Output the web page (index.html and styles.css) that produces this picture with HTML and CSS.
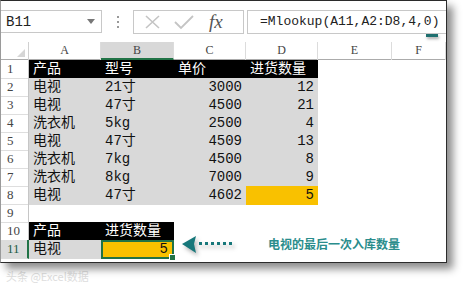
FILE: index.html
```html
<!DOCTYPE html>
<html lang="zh">
  <head>
    <meta charset="utf-8">
    <title>Lookup</title>
    <link rel="stylesheet" href="styles.css">
  </head>
  <body>
    <div class='sheet'>
        <div class='fbar'>
            <div class='namebox'><span>B11</span><i class='drop'></i></div>
            <div class='grip'><b></b><b></b><b></b></div>
            <div class='btns'>
                <svg width="20" height="16" viewBox="0 0 20 16"><path d="M3 2 L16 14 M16 2 L3 14" stroke="#c4c4c4" stroke-width="1.6" fill="none"/></svg>
                <svg width="22" height="16" viewBox="0 0 22 16"><path d="M2 8 L8 14 L20 2" stroke="#c4c4c4" stroke-width="1.8" fill="none"/></svg>
                <span class='fx'>fx</span>
            </div>
            <div class='formula'>=Mlookup(A11,A2:D8,4,0)</div>
            <div class='fold'></div>
        </div>
        <div class='row colhead'>
            <div class='corner'></div>
            <div class='ch'>A</div>
            <div class='ch sel'>B</div>
            <div class='ch'>C</div>
            <div class='ch'>D</div>
            <div class='ch'>E</div>
            <div class='ch'>F</div>
        </div>
        <div class='row'>
            <div class='rh'>1</div>
            <div class='c hd'>产品</div><div class='c hd'>型号</div><div class='c hd'>单价</div><div class='c hd'>进货数量</div><div class='c'></div><div class='c'></div>
        </div>
        <div class='row'>
            <div class='rh'>2</div>
            <div class='c gr'>电视</div><div class='c gr'>21寸</div><div class='c gr num'>3000</div><div class='c gr num'>12</div><div class='c'></div><div class='c'></div>
        </div>
        <div class='row'>
            <div class='rh'>3</div>
            <div class='c gr'>电视</div><div class='c gr'>47寸</div><div class='c gr num'>4500</div><div class='c gr num'>21</div><div class='c'></div><div class='c'></div>
        </div>
        <div class='row'>
            <div class='rh'>4</div>
            <div class='c gr'>洗衣机</div><div class='c gr'>5kg</div><div class='c gr num'>2500</div><div class='c gr num'>4</div><div class='c'></div><div class='c'></div>
        </div>
        <div class='row'>
            <div class='rh'>5</div>
            <div class='c gr'>电视</div><div class='c gr'>47寸</div><div class='c gr num'>4509</div><div class='c gr num'>13</div><div class='c'></div><div class='c'></div>
        </div>
        <div class='row'>
            <div class='rh'>6</div>
            <div class='c gr'>洗衣机</div><div class='c gr'>7kg</div><div class='c gr num'>4500</div><div class='c gr num'>8</div><div class='c'></div><div class='c'></div>
        </div>
        <div class='row'>
            <div class='rh'>7</div>
            <div class='c gr'>洗衣机</div><div class='c gr'>8kg</div><div class='c gr num'>7000</div><div class='c gr num'>9</div><div class='c'></div><div class='c'></div>
        </div>
        <div class='row'>
            <div class='rh'>8</div>
            <div class='c gr'>电视</div><div class='c gr'>47寸</div><div class='c gr num'>4602</div><div class='c yl num'>5</div><div class='c'></div><div class='c'></div>
        </div>
        <div class='row'>
            <div class='rh'>9</div>
            <div class='c'></div><div class='c'></div><div class='c'></div><div class='c'></div><div class='c'></div><div class='c'></div>
        </div>
        <div class='row'>
            <div class='rh'>10</div>
            <div class='c hd'>产品</div><div class='c hd'>进货数量</div><div class='c'></div><div class='c'></div><div class='c'></div><div class='c'></div>
        </div>
        <div class='row'>
            <div class='rh rsel'>11</div>
            <div class='c gr'>电视</div><div class='c yl num active'>5<i class='handle'></i></div><div class='c'></div><div class='c'></div><div class='c'></div><div class='c'></div>
        </div>
        <div class='note'>
            <svg width="56" height="20" viewBox="0 0 56 20">
                <path d="M0 8 L14 0 L12 8 L14 17 Z" fill="#17777a"/>
                <rect x="17" y="6" width="3" height="3" fill="#17777a"/>
                <rect x="23" y="6" width="3" height="3" fill="#17777a"/>
                <rect x="29" y="6" width="3" height="3" fill="#17777a"/>
                <rect x="35" y="6" width="3" height="3" fill="#17777a"/>
                <rect x="41" y="6" width="3" height="3" fill="#17777a"/>
                <rect x="47" y="6" width="3" height="3" fill="#17777a"/>
            </svg>
            <span class='label'>电视的最后一次入库数量</span>
        </div>
    </div>
    <div class='mark'>头条 @Excel数据</div>
  </body>
</html>
```
FILE: styles.css
```css
body {
    margin: 0;
    background-color: #FFFFFF;
    font-family: "Liberation Mono", "Noto Sans CJK SC", monospace;
}
.sheet {
    position: relative;
    box-sizing: border-box;
    width: 447px;
    height: 263px;
    border: 1px solid #2b2b2b;
    border-left-color: #9a9a9a;
    background-color: #FFFFFF;
    box-shadow: 6px 6px 8px rgba(0,0,0,0.45);
}
.fbar {
    position: relative;
    display: flex;
    align-items: center;
    height: 41px;
}
.namebox {
    box-sizing: border-box;
    display: flex;
    align-items: center;
    justify-content: space-between;
    width: 101px;
    height: 23px;
    padding: 0 6px 0 5px;
    border: 1px solid #c8c8c8;
    border-left: none;
    font-size: 14px;
    color: #222;
}
.drop {
    width: 0;
    height: 0;
    border-left: 4px solid transparent;
    border-right: 4px solid transparent;
    border-top: 5px solid #777;
}
.grip {
    display: flex;
    flex-direction: column;
    gap: 3px;
    width: 31px;
    align-items: center;
}
.grip b {
    width: 2px;
    height: 2px;
    background-color: #999;
}
.btns {
    box-sizing: border-box;
    display: flex;
    align-items: center;
    gap: 10px;
    width: 111px;
    height: 24px;
    padding-left: 9px;
    border: 1px solid #c8c8c8;
}
.fx {
    font-family: "Liberation Serif", serif;
    font-style: italic;
    font-size: 19px;
    color: #555;
    margin-left: 4px;
}
.formula {
    box-sizing: border-box;
    flex: 1;
    height: 24px;
    margin-left: 3px;
    padding-left: 12px;
    border: 1px solid #c8c8c8;
    border-right: none;
    font-size: 13px;
    line-height: 22px;
    color: #222;
}
.fold {
    position: absolute;
    left: 425px;
    top: 33px;
    width: 12px;
    height: 3px;
    background-color: #1e6f6f;
    box-shadow: 1px 2px 3px rgba(0,0,0,0.35);
}
.row {
    display: grid;
    grid-template-columns: 28px 72px 73px 72px 72px 74px 1fr;
    height: 18px;
}
.colhead {
    border-bottom: 1px solid #ababab;
    height: 18px;
    box-sizing: border-box;
}
.corner {
    position: relative;
    border-right: 1px solid #d0d0d0;
}
.corner::after {
    content: '';
    position: absolute;
    right: 3px;
    bottom: 3px;
    border-left: 8px solid transparent;
    border-bottom: 8px solid #d6d6d6;
}
.ch {
    box-sizing: border-box;
    border-right: 1px solid #dcdcdc;
    text-align: center;
    font-family: "Liberation Serif", serif;
    font-size: 12px;
    line-height: 17px;
    color: #444;
}
.ch.sel {
    background-color: #d8d8d8;
    border-bottom: 2px solid #217346;
    line-height: 16px;
}
.rh {
    box-sizing: border-box;
    border-right: 1px solid #c6c6c6;
    border-bottom: 1px solid #dedede;
    padding-left: 6px;
    font-family: "Liberation Serif", serif;
    font-size: 13px;
    line-height: 18px;
    color: #444;
}
.rh.rsel {
    background-color: #dcdcdc;
    border-right: 2px solid #217346;
    color: #1d5d45;
}
.c {
    box-sizing: border-box;
    padding: 0 3px 0 4px;
    font-size: 14px;
    line-height: 18px;
    color: #111;
    white-space: nowrap;
}
.hd {
    background-color: #000000;
    color: #FFFFFF;
}
.gr {
    background-color: #d9d9d9;
}
.yl {
    background-color: #f9c100;
}
.num {
    text-align: right;
    padding-right: 4px;
}
.active {
    position: relative;
    border: 2px solid #217346;
    line-height: 14px;
}
.handle {
    position: absolute;
    right: -4px;
    bottom: -4px;
    width: 5px;
    height: 5px;
    background-color: #217346;
    border: 1px solid #FFFFFF;
}
.note {
    position: absolute;
    left: 181px;
    top: 235px;
    display: flex;
    align-items: flex-start;
}
.note svg {
    filter: drop-shadow(2px 3px 2px rgba(0,0,0,0.3));
}
.label {
    margin-left: 30px;
    margin-top: -1px;
    font-family: "Noto Sans CJK SC", sans-serif;
    font-weight: bold;
    font-size: 12px;
    color: #2a8d8c;
}
.mark {
    margin: 5px 0 0 6px;
    font-family: "Noto Sans CJK SC", sans-serif;
    font-size: 11px;
    color: #dddddd;
}
```
